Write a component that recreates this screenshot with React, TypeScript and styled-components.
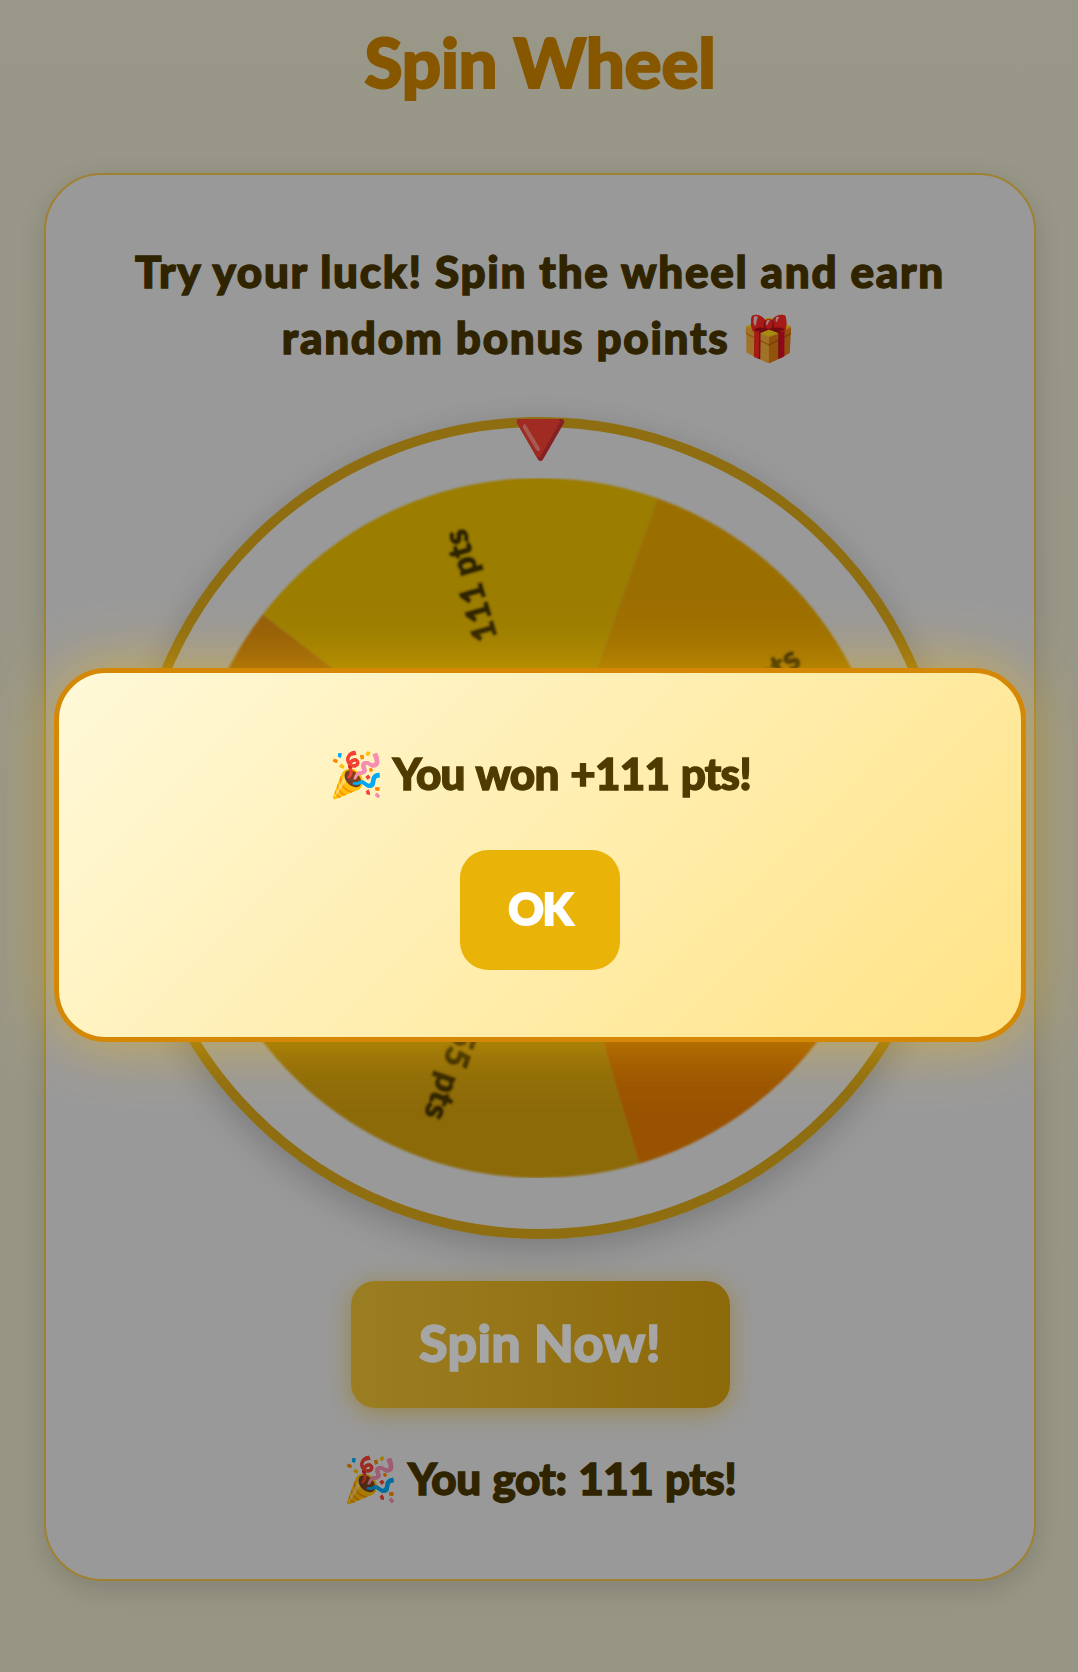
import styled, { createGlobalStyle } from 'styled-components';

const FONT = `Lato, 'Noto Color Emoji', 'Noto Sans', sans-serif`;

const GlobalStyle = createGlobalStyle`
  * {
    box-sizing: border-box;
  }
  html, body {
    margin: 0;
    padding: 0;
  }
  body {
    background: #eae7ce;
    font-family: ${FONT};
  }
`;

interface Slice {
  label: string;
  color: string;
}

const SLICES: Slice[] = [
  { label: '111 pts', color: '#eec000' },
  { label: '33 pts', color: '#efaa00' },
  { label: '77 pts', color: '#ec8000' },
  { label: '55 pts', color: '#d8a408' },
  { label: '99 pts', color: '#e49008' },
];

const RADIUS = 350;
const START_ANGLE = -52.4;
const SWEEP = 360 / SLICES.length;

const pointAt = (deg: number, r: number) => {
  const rad = ((deg - 90) * Math.PI) / 180;
  return `${(r * Math.cos(rad)).toFixed(2)} ${(r * Math.sin(rad)).toFixed(2)}`;
};

const Wheel = () => (
  <WheelSvg viewBox='-350 -350 700 700' role='img'>
    <defs>
      <filter id='soft' x='-5%' y='-5%' width='110%' height='110%'>
        <feGaussianBlur stdDeviation='1.1' />
      </filter>
    </defs>
    <g filter='url(#soft)'>
      {SLICES.map((slice, i) => {
        const from = START_ANGLE + i * SWEEP;
        const to = from + SWEEP;
        return (
          <path
            key={slice.label}
            d={`M0 0 L${pointAt(from, RADIUS)} A${RADIUS} ${RADIUS} 0 0 1 ${pointAt(to, RADIUS)} Z`}
            fill={slice.color}
          />
        );
      })}
      {SLICES.map((slice, i) => (
        <WheelLabel
          key={slice.label}
          x={310}
          y={0}
          textAnchor='end'
          dominantBaseline='central'
          transform={`rotate(${START_ANGLE + i * SWEEP + SWEEP / 2 - 90})`}
        >
          {slice.label}
        </WheelLabel>
      ))}
    </g>
  </WheelSvg>
);

const App = () => (
  <Page>
    <GlobalStyle />
    <Title>Spin Wheel</Title>
    <Card>
      <Intro>
        Try your luck! Spin the wheel and earn
        <br />
        random bonus points 🎁
      </Intro>
      <WheelFrame>
        <Pointer>🔻</Pointer>
        <Ring>
          <Wheel />
        </Ring>
      </WheelFrame>
      <SpinButton disabled>Spin Now!</SpinButton>
      <Result>🎉 You got: 111 pts!</Result>
    </Card>
    <Overlay>
      <Modal>
        <ModalText>🎉 You won +111 pts!</ModalText>
        <OkButton>OK</OkButton>
      </Modal>
    </Overlay>
  </Page>
);

const Page = styled.div`
  display: flex;
  flex-direction: column;
  align-items: center;
  width: 100%;
  min-height: 1672px;
  padding: 22px 42px 0 44px;
  background: linear-gradient(180deg, #ebe8d0, #e9e6cc);
`;

const Title = styled.h1`
  margin: 0 0 71px;
  color: #d08600;
  font: 900 69px/80px ${FONT};
  letter-spacing: -0.2px;
  -webkit-text-stroke: 2px currentColor;
`;

const Card = styled.div`
  display: flex;
  flex-direction: column;
  align-items: center;
  width: 100%;
  padding: 63px 0 68px;
  border: 2px solid #f5c84c;
  border-radius: 58px;
  background: #ebebeb;
  box-shadow: 0 8px 28px rgba(0, 0, 0, 0.14);
`;

const Intro = styled.p`
  margin: 0 0 47px;
  color: #4a3800;
  font: 900 44px/66px ${FONT};
  text-align: center;
  letter-spacing: 1.72px;
  -webkit-text-stroke: 1.4px currentColor;
`;

const WheelFrame = styled.div`
  position: relative;
  width: 822px;
  height: 822px;
`;

const Ring = styled.div`
  display: flex;
  align-items: center;
  justify-content: center;
  width: 100%;
  height: 100%;
  border: 10px solid #dcaa1c;
  border-radius: 50%;
  box-shadow: 0 10px 34px rgba(0, 0, 0, 0.2);
`;

const WheelSvg = styled.svg`
  display: block;
  width: 700px;
  height: 700px;
`;

const WheelLabel = styled.text`
  fill: #4a3800;
  stroke: #4a3800;
  stroke-width: 1.6px;
  font: 900 33px ${FONT};
  letter-spacing: 0.6px;
`;

const Pointer = styled.span`
  position: absolute;
  top: -22px;
  left: 50%;
  z-index: 1;
  font: 82px/1 ${FONT};
  transform: translateX(-50%);
`;

const SpinButton = styled.button`
  width: 379px;
  height: 127px;
  margin-top: 42px;
  padding: 0 0 6px;
  border: 0;
  border-radius: 24px;
  background: linear-gradient(90deg, #efc235, #d8a20f);
  box-shadow: 0 4px 24px rgba(234, 179, 8, 0.55);
  color: #fff;
  font: 900 52px/1 ${FONT};
  letter-spacing: 0.3px;
  -webkit-text-stroke: 1.4px currentColor;
`;

const Result = styled.p`
  margin: 37px 0 0;
  color: #4a3800;
  font: 900 44px/66px ${FONT};
  text-align: center;
  letter-spacing: -0.55px;
  word-spacing: 2px;
  -webkit-text-stroke: 1.4px currentColor;
`;

const Overlay = styled.div`
  position: fixed;
  inset: 0;
  z-index: 10;
  display: flex;
  align-items: center;
  justify-content: center;
  padding: 38px 52px 0 54px;
  background: rgba(0, 0, 0, 0.35);
`;

const Modal = styled.div`
  display: flex;
  flex-direction: column;
  align-items: center;
  width: 100%;
  height: 374px;
  padding-top: 67px;
  border: 5px solid #d48806;
  border-radius: 52px;
  background: linear-gradient(135deg, #fff9d9, #ffe386);
  box-shadow: 0 0 60px rgba(255, 193, 7, 0.5);
`;

const ModalText = styled.p`
  margin: 0 0 44px;
  color: #4f3b00;
  font: 900 44px/66px ${FONT};
  letter-spacing: -0.8px;
  word-spacing: 2px;
  -webkit-text-stroke: 1.4px currentColor;
`;

const OkButton = styled.button`
  width: 160px;
  height: 120px;
  padding: 0 0 5px;
  border: 0;
  border-radius: 28px;
  background: #eab308;
  color: #fff;
  font: 900 44px/1 ${FONT};
  letter-spacing: -1.5px;
  -webkit-text-stroke: 2px currentColor;
`;

export default App;
